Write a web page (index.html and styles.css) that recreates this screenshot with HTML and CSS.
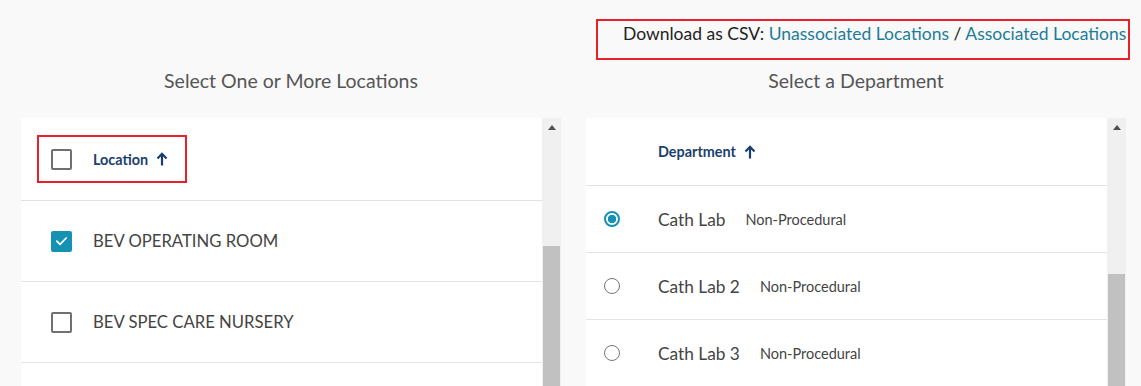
FILE: index.html
```html
<!DOCTYPE html>
<html lang="en">

<head>
    <meta charset="UTF-8">
    <meta name="viewport" content="width=device-width, initial-scale=1.0">
    <title>Location Departments</title>
    <link rel="stylesheet" href="styles.css">
</head>

<body>

    <div class="page">
        <!-- Descargas CSV -->
        <div class="csv-bar">
            <div class="csv-box">
                Download as CSV: <a href="#">Unassociated Locations</a> / <a href="#">Associated Locations</a>
            </div>
        </div>

        <div class="columns">
            <!-- Columna de ubicaciones -->
            <section class="column">
                <h2>Select One or More Locations</h2>
                <div class="panel">
                    <div class="list">
                        <div class="list-head loc-head">
                            <div class="head-mark">
                                <span class="checkbox"></span>
                                <span class="sort-label">Location
                                    <svg class="arrow" viewBox="0 0 12 14" width="12" height="14"><path d="M6 13.5 V2.5 M1.5 6.5 L6 1.8 L10.5 6.5" fill="none" stroke="#1b3f6c" stroke-width="2.2" stroke-linejoin="miter"/></svg>
                                </span>
                            </div>
                        </div>
                        <div class="loc-row">
                            <span class="checkbox checked">
                                <svg viewBox="0 0 20 20" width="20" height="20"><path d="M4.5 10.2 L8.3 14 L15.5 6.5" fill="none" stroke="#fff" stroke-width="2" stroke-linecap="round" stroke-linejoin="round"/></svg>
                            </span>
                            <span class="loc-name">BEV OPERATING ROOM</span>
                        </div>
                        <div class="loc-row">
                            <span class="checkbox"></span>
                            <span class="loc-name">BEV SPEC CARE NURSERY</span>
                        </div>
                        <div class="loc-row"></div>
                    </div>
                    <div class="scrollbar">
                        <span class="scroll-arrow"></span>
                        <span class="scroll-thumb loc-thumb"></span>
                    </div>
                </div>
            </section>

            <!-- Columna de departamentos -->
            <section class="column">
                <h2>Select a Department</h2>
                <div class="panel">
                    <div class="list">
                        <div class="list-head dep-head">
                            <span class="sort-label">Department
                                <svg class="arrow" viewBox="0 0 12 14" width="12" height="14"><path d="M6 13.5 V2.5 M1.5 6.5 L6 1.8 L10.5 6.5" fill="none" stroke="#1b3f6c" stroke-width="2.2" stroke-linejoin="miter"/></svg>
                            </span>
                        </div>
                        <div class="dep-row">
                            <span class="radio selected"></span>
                            <span class="dep-name">Cath Lab</span>
                            <span class="dep-type">Non-Procedural</span>
                        </div>
                        <div class="dep-row">
                            <span class="radio"></span>
                            <span class="dep-name">Cath Lab 2</span>
                            <span class="dep-type">Non-Procedural</span>
                        </div>
                        <div class="dep-row">
                            <span class="radio"></span>
                            <span class="dep-name">Cath Lab 3</span>
                            <span class="dep-type">Non-Procedural</span>
                        </div>
                    </div>
                    <div class="scrollbar">
                        <span class="scroll-arrow"></span>
                        <span class="scroll-thumb dep-thumb"></span>
                    </div>
                </div>
            </section>
        </div>
    </div>

</body>

</html>
```

FILE: styles.css
```css
body {
    margin: 0;
    padding: 0;
    background-color: #f9f9f9;
    font-family: Lato, "Open Sans", sans-serif;
    color: #444;
    overflow: hidden;
}

.page {
    width: 1141px;
    height: 386px;
}

/* Barra de descarga */
.csv-bar {
    display: flex;
    justify-content: flex-end;
    padding: 19px 11px 0 0;
}

.csv-box {
    box-sizing: border-box;
    width: 534px;
    height: 41px;
    border: 2px solid #e8202a;
    padding: 2px 2px 0 25px;
    font-size: 17.5px;
    line-height: 22px;
    color: #222;
    white-space: nowrap;
}

.csv-box a {
    color: #1d7c9a;
    text-decoration: none;
}

.columns {
    display: flex;
    gap: 25px;
    padding-left: 21px;
}

.column {
    width: 540px;
}

h2 {
    margin: 0;
    padding: 11px 0 27px;
    font-size: 19.5px;
    line-height: 20px;
    font-weight: normal;
    color: #555;
    text-align: center;
}

.panel {
    display: flex;
    height: 268px;
    overflow: hidden;
}

.list {
    flex: 1;
    background-color: #ffffff;
}

.list-head {
    display: flex;
    align-items: center;
    border-bottom: 1px solid #e2e2e2;
}

.loc-head {
    height: 82px;
    padding-left: 16px;
}

.dep-head {
    height: 67px;
    padding-left: 72px;
}

.head-mark {
    box-sizing: border-box;
    width: 150px;
    height: 48px;
    border: 2px solid #e8202a;
    padding-left: 12px;
    display: flex;
    align-items: center;
    gap: 21px;
}

.sort-label {
    font-size: 14.4px;
    font-weight: bold;
    color: #1b3f6c;
    display: flex;
    align-items: center;
}

.arrow {
    margin-left: 8px;
}

/* Casillas */
.checkbox {
    box-sizing: border-box;
    width: 21px;
    height: 21px;
    border: 2px solid #707070;
    border-radius: 2px;
    background-color: #fff;
    display: flex;
    align-items: center;
    justify-content: center;
    flex-shrink: 0;
}

.checkbox.checked {
    background-color: #1591b4;
    border-color: #1591b4;
}

.loc-row {
    height: 80px;
    display: flex;
    align-items: center;
    gap: 21px;
    padding-left: 30px;
    border-bottom: 1px solid #e4e4e4;
}

.loc-name {
    font-size: 16.7px;
    color: #444;
}

/* Radios */
.dep-row {
    height: 66px;
    display: flex;
    align-items: center;
    padding-left: 18px;
    border-bottom: 1px solid #e4e4e4;
}

.radio {
    box-sizing: border-box;
    width: 16px;
    height: 16px;
    border: 1.5px solid #777;
    border-radius: 50%;
    margin-right: 38px;
    flex-shrink: 0;
}

.radio.selected {
    border: 2px solid #1591b4;
    background: radial-gradient(circle, #1591b4 0 4px, #fff 4.5px);
}

.dep-name {
    font-size: 17.3px;
    color: #444;
    margin-right: 20px;
}

.dep-type {
    font-size: 14.5px;
    color: #444;
}

/* Barra de desplazamiento */
.scrollbar {
    width: 19px;
    background-color: #f0f0f0;
    display: flex;
    flex-direction: column;
    align-items: center;
}

.scroll-arrow {
    margin-top: 7px;
    width: 0;
    height: 0;
    border-left: 4px solid transparent;
    border-right: 4px solid transparent;
    border-bottom: 5px solid #505050;
}

.scroll-thumb {
    width: 17px;
    flex: 1;
    background-color: #c1c1c1;
}

.loc-thumb {
    margin-top: 116px;
}

.dep-thumb {
    margin-top: 144px;
}
```
